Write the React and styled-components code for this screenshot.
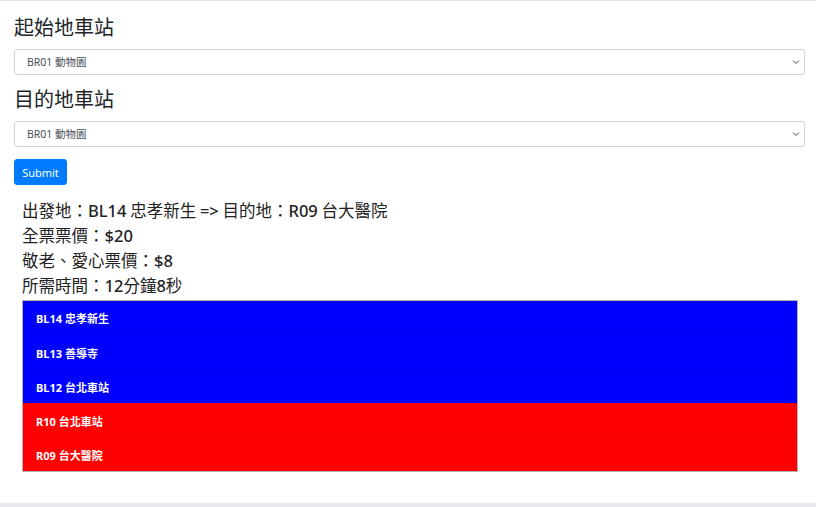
import React from "react";
import styled, { createGlobalStyle } from "styled-components";

const Global = createGlobalStyle`
  html, body { margin: 0; padding: 0; background: #e9e9ed; }
  body { font-family: "Noto Sans", "Noto Sans CJK TC", sans-serif; color: #212529; }
`;

const Card = styled.div`
  background: #fff;
  border-top: 1px solid #e3e3e3;
  height: 503px;
  box-sizing: border-box;
  padding: 0 11px 0 14px;
`;

const Heading = styled.h4`
  margin: ${(p) => p.$top}px 0 10px;
  font-size: 20px;
  line-height: 24px;
  height: 24px;
  font-weight: 400;
  font-family: "Noto Sans CJK TC", sans-serif;
  color: #212529;
`;

const chevron =
  "data:image/svg+xml;utf8,<svg xmlns='http://www.w3.org/2000/svg' width='8' height='6' viewBox='0 0 8 6'><path d='M1 1.5 L4 4.5 L7 1.5' fill='none' stroke='%23444' stroke-width='1'/></svg>";

const Select = styled.select`
  display: block;
  width: 100%;
  height: 26px;
  box-sizing: border-box;
  border: 1px solid #ced4da;
  border-radius: 3px;
  background: #fff url("${chevron}") no-repeat right 4px center;
  appearance: none;
  padding: 0 20px 0 12px;
  font-family: "Noto Sans", "Noto Sans CJK TC", sans-serif;
  font-size: 10.5px;
  color: #495057;
`;

const Button = styled.button`
  display: block;
  width: 53px;
  height: 26px;
  border: 1px solid #007bff;
  border-radius: 3px;
  background: #007bff;
  color: #fff;
  font-family: "Noto Sans", sans-serif;
  font-size: 11px;
  padding: 0;
  margin-top: 12px;
`;

const Result = styled.div`
  margin: 13px 7px 0 8px;
`;

const Info = styled.div`
  font-size: 16.5px;
  line-height: 25px;
  height: 25px;
  overflow: visible;
  white-space: nowrap;
  font-family: "Noto Sans CJK TC", sans-serif;
  color: #222;
`;

const Latin = styled.span`
  font-family: "Noto Sans", sans-serif;
  font-weight: 500;
  line-height: 1;
`;

const List = styled.ul`
  list-style: none;
  margin: 2px 0 0;
  padding: 0;
  border: 1px solid rgba(0, 0, 0, 0.3);
`;

const Item = styled.li`
  height: 34px;
  box-sizing: border-box;
  display: flex;
  align-items: center;
  padding-left: 13px;
  background: ${(p) => (p.$line === "BL" ? "#0000ff" : "#ff0000")};
  color: #fff;
  font-size: 11px;
  font-weight: 700;
  font-family: "Noto Sans", "Noto Sans CJK TC", sans-serif;
  border-top: ${(p) => (p.$first ? "none" : "1px solid rgba(0,0,0,0.06)")};
`;

const stations = [
  ["BL", "BL14 忠孝新生"],
  ["BL", "BL13 善導寺"],
  ["BL", "BL12 台北車站"],
  ["R", "R10 台北車站"],
  ["R", "R09 台大醫院"],
];

export default function App() {
  return (
    <>
      <Global />
      <Card>
        <Heading $top={14}>起始地車站</Heading>
        <Select defaultValue="BR01">
          <option value="BR01">BR01 動物園</option>
        </Select>
        <Heading $top={12}>目的地車站</Heading>
        <Select defaultValue="BR01">
          <option value="BR01">BR01 動物園</option>
        </Select>
        <Button>Submit</Button>
        <Result>
          <Info>
            出發地：<Latin>BL14</Latin> 忠孝新生 <Latin>=&gt;</Latin> 目的地：<Latin>R09</Latin> 台大醫院
          </Info>
          <Info>
            全票票價：<Latin>$20</Latin>
          </Info>
          <Info>
            敬老、愛心票價：<Latin>$8</Latin>
          </Info>
          <Info>
            所需時間：<Latin>12</Latin>分鐘<Latin>8</Latin>秒
          </Info>
          <List>
            {stations.map(([line, name], i) => (
              <Item key={name} $line={line} $first={i === 0}>
                {name}
              </Item>
            ))}
          </List>
        </Result>
      </Card>
    </>
  );
}
